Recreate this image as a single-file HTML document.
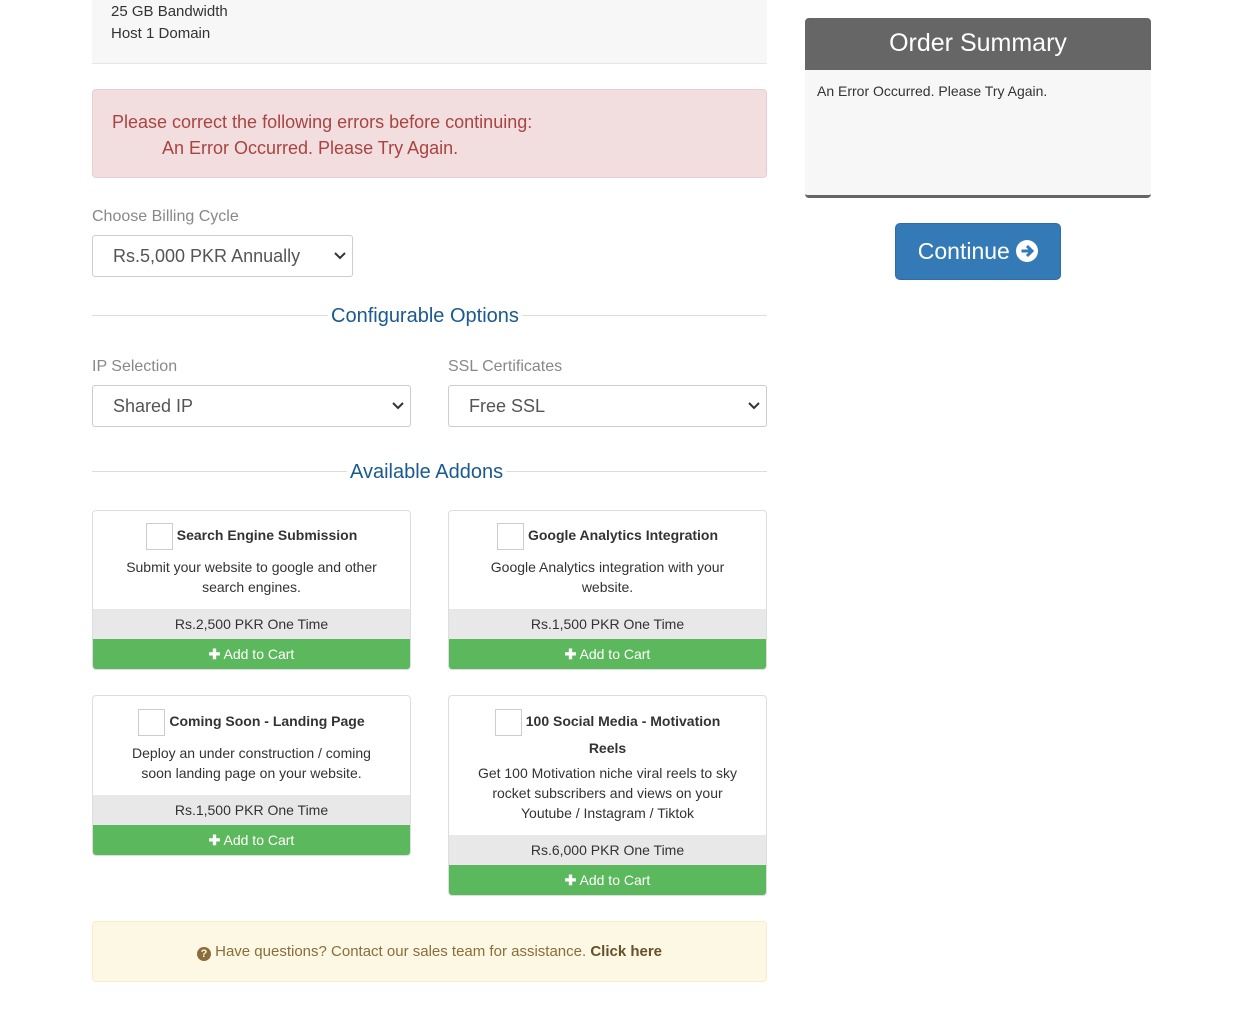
<!DOCTYPE html>
<html><head><meta charset="utf-8"><style>
*{box-sizing:border-box;margin:0;padding:0}
body{width:1251px;height:1031px;position:relative;background:#fff;font-family:"Liberation Sans",sans-serif;color:#333;overflow:hidden}
.a{position:absolute}
.sel{position:absolute;border:1px solid #ccc;border-radius:3px;background:#fff;font-size:18px;color:#555;padding-left:20px;display:flex;align-items:center}
.sel svg{position:absolute;right:6px;top:50%;margin-top:-4px}
.lbl{position:absolute;font-size:16px;color:#888}
.hr{position:absolute;height:1px;background:#ddd}
.sec{position:absolute;background:#fff;color:#1a5a8e;font-size:20px;padding:0 3px}
.card{position:absolute;border:1px solid #ddd;border-radius:4px;background:#fff;overflow:hidden;text-align:center;font-size:14px}
.card .t{position:absolute;left:0;right:0;font-weight:bold;font-size:14px;color:#333}
.cb{display:inline-block;width:27px;height:27px;border:1px solid #ccc;vertical-align:middle;margin-right:4px}
.card .d{position:absolute;left:0;right:0;line-height:20px;color:#333}
.card .p{position:absolute;left:0;right:0;height:30px;line-height:30px;background:#e8e8e8;color:#333}
.card .g{position:absolute;left:0;right:0;height:30px;line-height:30px;background:#5cb85c;color:#fff}
</style></head><body>
<div class="a" style="left:92px;top:0;width:675px;height:64px;background:#f7f7f7;border-bottom:1px solid #e6e6e6"></div>
<div class="a" style="left:111px;top:1px;font-size:15px;line-height:22px;color:#333">25 GB Bandwidth<br>Host 1 Domain</div>

<div class="a" style="left:92px;top:89px;width:675px;height:89px;background:#f2dede;border:1px solid #ebccd1;border-radius:4px;color:#a94442;font-size:18px;line-height:26px;padding:19px 0 0 19px">Please correct the following errors before continuing:<br><span style="padding-left:50px">An Error Occurred. Please Try Again.</span></div>

<div class="lbl" style="left:92px;top:208px">Choose Billing Cycle</div>
<div class="sel" style="left:92px;top:235px;width:261px;height:42px">Rs.5,000 PKR Annually<svg width="12" height="8"><path d="M1 1l5 5 5-5" stroke="#333" stroke-width="2" fill="none"/></svg></div>

<div class="hr" style="left:92px;top:315px;width:675px"></div>
<div class="sec" style="left:328px;top:305px">Configurable Options</div>

<div class="lbl" style="left:92px;top:358px">IP Selection</div>
<div class="sel" style="left:92px;top:385px;width:319px;height:42px">Shared IP<svg width="12" height="8"><path d="M1 1l5 5 5-5" stroke="#333" stroke-width="2" fill="none"/></svg></div>
<div class="lbl" style="left:448px;top:358px">SSL Certificates</div>
<div class="sel" style="left:448px;top:385px;width:319px;height:42px">Free SSL<svg width="12" height="8"><path d="M1 1l5 5 5-5" stroke="#333" stroke-width="2" fill="none"/></svg></div>

<div class="hr" style="left:92px;top:471px;width:675px"></div>
<div class="sec" style="left:347px;top:461px">Available Addons</div>

<div class="card" style="left:92px;top:510px;width:319px;height:160px">
<div class="t" style="top:12px"><span class="cb"></span>Search Engine Submission</div>
<div class="d" style="top:46px;padding:0 20px">Submit your website to google and other search engines.</div>
<div class="p" style="top:98px">Rs.2,500 PKR One Time</div>
<div class="g" style="top:128px"><b>✚</b> Add to Cart</div></div>

<div class="card" style="left:448px;top:510px;width:319px;height:160px">
<div class="t" style="top:12px"><span class="cb"></span>Google Analytics Integration</div>
<div class="d" style="top:46px;padding:0 25px">Google Analytics integration with your website.</div>
<div class="p" style="top:98px">Rs.1,500 PKR One Time</div>
<div class="g" style="top:128px"><b>✚</b> Add to Cart</div></div>

<div class="card" style="left:92px;top:695px;width:319px;height:161px">
<div class="t" style="top:13px"><span class="cb"></span>Coming Soon - Landing Page</div>
<div class="d" style="top:47px;padding:0 25px">Deploy an under construction / coming soon landing page on your website.</div>
<div class="p" style="top:99px">Rs.1,500 PKR One Time</div>
<div class="g" style="top:129px"><b>✚</b> Add to Cart</div></div>

<div class="card" style="left:448px;top:695px;width:319px;height:201px">
<div class="t" style="top:13px;line-height:24px;padding:0 40px"><span class="cb"></span>100 Social Media - Motivation Reels</div>
<div class="d" style="top:67px;padding:0 18px">Get 100 Motivation niche viral reels to sky rocket subscribers and views on your Youtube / Instagram / Tiktok</div>
<div class="p" style="top:139px">Rs.6,000 PKR One Time</div>
<div class="g" style="top:169px"><b>✚</b> Add to Cart</div></div>

<div class="a" style="left:92px;top:921px;width:675px;height:61px;background:#fcf8e3;border:1px solid #faebcc;border-radius:4px;color:#8a6d3b;font-size:15px;text-align:center;line-height:59px"><span style="display:inline-block;width:14px;height:14px;border-radius:50%;background:#8a6d3b;color:#fcf8e3;font-size:11px;line-height:14px;font-weight:bold;vertical-align:-1px">?</span> Have questions? Contact our sales team for assistance. <b style="color:#66512c">Click here</b></div>

<div class="a" style="left:805px;top:18px;width:346px;height:180px;background:#f7f7f7;border-radius:4px;border-bottom:3px solid #666;overflow:hidden">
<div style="height:52px;background:#666;color:#fff;font-size:25px;text-align:center;line-height:50px">Order Summary</div>
<div style="padding:13px 12px;font-size:14px;color:#333">An Error Occurred. Please Try Again.</div></div>

<div class="a" style="left:895px;top:223px;width:166px;height:57px;background:#337ab7;border:1px solid #2e6da4;border-radius:5px;color:#fff;font-size:23px;line-height:54px;text-align:center">Continue <svg width="22" height="22" viewBox="0 0 22 22" style="vertical-align:-3px"><circle cx="11" cy="11" r="11" fill="#fff"/><path d="M5.5 11h10M11 6l5 5-5 5" stroke="#337ab7" stroke-width="3" fill="none"/></svg></div>
</body></html>
